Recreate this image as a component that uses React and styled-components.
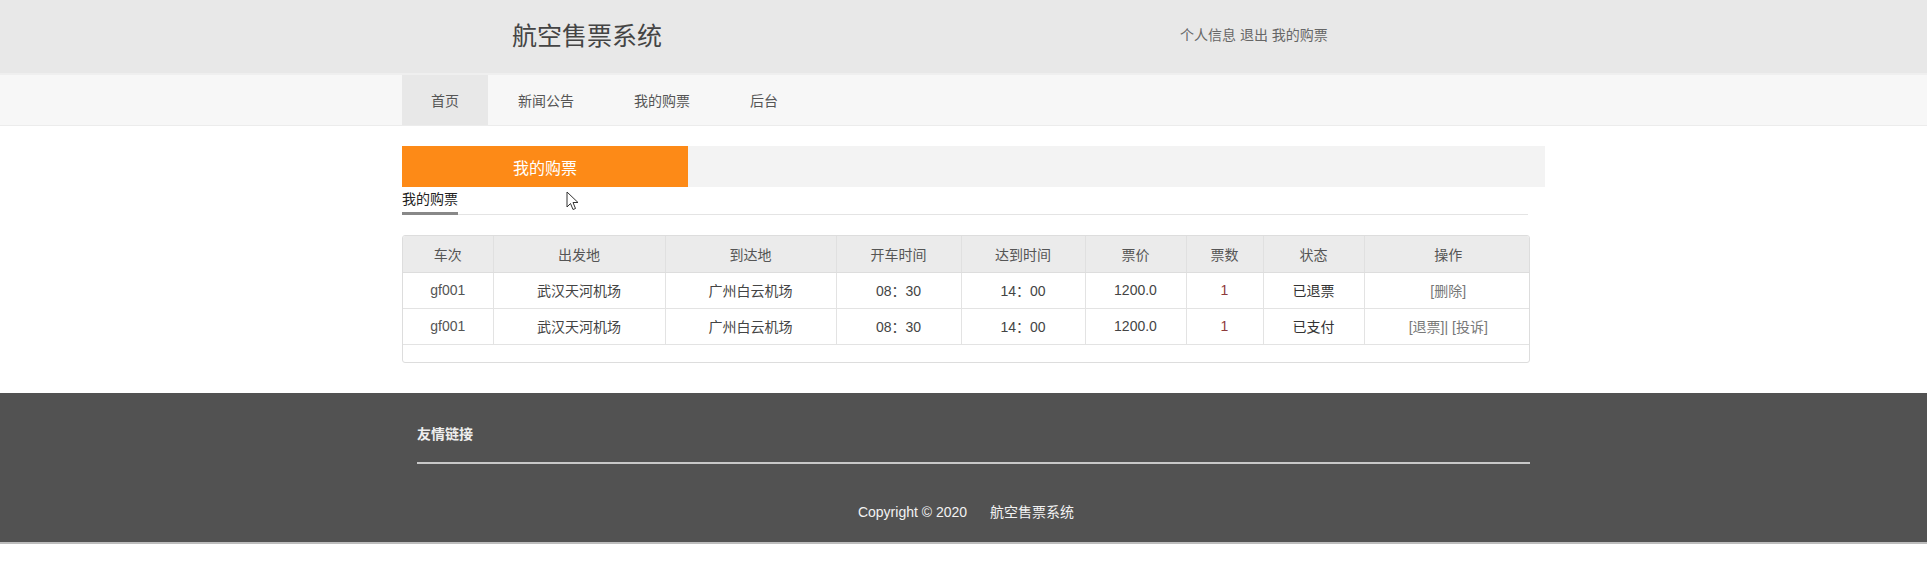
import React from "react";
import styled, { createGlobalStyle } from "styled-components";

const Global = createGlobalStyle`
  html, body { margin: 0; padding: 0; background: #fff; }
  body {
    font-family: "Liberation Sans", "Noto Sans CJK SC", sans-serif;
    font-size: 14px;
    color: #333;
  }
  * { box-sizing: border-box; }
`;

const Container = styled.div`
  width: 1128px;
  margin: 0 auto;
  padding-left: 5px;
  box-sizing: content-box;
`;

const Header = styled.header`
  height: 75px;
  background: #e8e8e8;
  border-bottom: 2px solid #efefef;
`;

const HeaderInner = styled(Container)`
  height: 73px;
  display: flex;
  align-items: center;
`;

const Title = styled.h1`
  margin: 0 0 0 110px;
  font-size: 25px;
  font-weight: normal;
  color: #444;
  line-height: 1;
  width: 668px;
  padding-bottom: 1px;
`;

const TopLinks = styled.div`
  font-size: 14px;
  color: #666;
  padding-bottom: 6px;
  a { color: #666; text-decoration: none; }
`;

const NavBar = styled.nav`
  height: 51px;
  background: #f7f7f7;
  border-bottom: 1px solid #ececec;
`;

const NavInner = styled(Container)`
  display: flex;
  height: 50px;
`;

const NavItem = styled.a`
  display: flex;
  align-items: center;
  padding: 0 ${(p) => (p.$active ? "29px" : "30px")};
  height: 50px;
  font-size: 14px;
  color: #555;
  text-decoration: none;
  background: ${(p) => (p.$active ? "#e8e8e8" : "transparent")};
`;

const Main = styled(Container)`
  padding-top: 20px;
  padding-bottom: 30px;
  position: relative;
`;

const TabBar = styled.div`
  display: flex;
  height: 41px;
  background: #f3f3f3;
  margin-right: -15px;
`;

const OrangeTab = styled.div`
  width: 286px;
  background: #fd8a17;
  color: #fff;
  font-size: 16px;
  display: flex;
  align-items: center;
  justify-content: center;
`;

const SubHead = styled.div`
  border-bottom: 1px solid #e4e4e4;
  margin-right: 2px;
`;

const SubTitle = styled.div`
  display: inline-block;
  font-size: 14px;
  color: #222;
  line-height: 25px;
  border-bottom: 3px solid #888;
  margin-bottom: -1px;
`;

const TableWrap = styled.div`
  margin-top: 20px;
  border: 1px solid #ddd;
  border-radius: 3px;
  overflow: hidden;
`;

const Table = styled.table`
  width: 100%;
  border-collapse: collapse;
  table-layout: fixed;
`;

const Th = styled.th`
  height: 36px;
  background: #ebebeb;
  font-weight: normal;
  font-size: 14px;
  color: #555;
  border-left: 1px solid #e0e0e0;
  border-bottom: 1px solid #ddd;
  &:first-child { border-left: none; }
`;

const Td = styled.td`
  height: ${(p) => (p.$empty ? "18px" : "36px")};
  text-align: center;
  font-size: 14px;
  color: ${(p) => p.$color || "#444"};
  border-left: 1px solid #e3e3e3;
  border-top: 1px solid #e3e3e3;
  &:first-child { border-left: none; }
`;

const OpLink = styled.a`
  color: #777;
  text-decoration: none;
`;

const Cursor = styled.svg`
  position: absolute;
  left: 169px;
  top: 65px;
  width: 13px;
  height: 20px;
`;

const Footer = styled.footer`
  background: #525252;
  border-bottom: 2px solid #bdbdbd;
  height: 151px;
`;

const FooterInner = styled(Container)`
  padding-top: 32px;
`;

const FooterHead = styled.div`
  margin-left: 15px;
  padding-bottom: 19px;
  border-bottom: 2px solid #c8c8c8;
  font-weight: bold;
  font-size: 14px;
  color: #eee;
  line-height: 18px;
`;

const Copyright = styled.div`
  text-align: center;
  color: #f2f2f2;
  font-size: 14px;
  margin-top: 37px;
  span + span { margin-left: 23px; }
`;

const cols = [90, 172, 171, 125, 124, 101, 77, 101, 168];
const heads = ["车次", "出发地", "到达地", "开车时间", "达到时间", "票价", "票数", "状态", "操作"];

const rows = [
  { status: "已退票", ops: ["[删除]"] },
  { status: "已支付", ops: ["[退票]|", "[投诉]"] },
];

export default function App() {
  return (
    <>
      <Global />
      <Header>
        <HeaderInner>
          <Title>航空售票系统</Title>
          <TopLinks>
            <a href="#">个人信息</a> <a href="#">退出</a> <a href="#">我的购票</a>
          </TopLinks>
        </HeaderInner>
      </Header>
      <NavBar>
        <NavInner>
          <NavItem href="#" $active>首页</NavItem>
          <NavItem href="#">新闻公告</NavItem>
          <NavItem href="#">我的购票</NavItem>
          <NavItem href="#">后台</NavItem>
        </NavInner>
      </NavBar>
      <Main>
        <TabBar>
          <OrangeTab>我的购票</OrangeTab>
        </TabBar>
        <SubHead>
          <SubTitle>我的购票</SubTitle>
        </SubHead>
        <Cursor viewBox="0 0 13 20">
          <path d="M1 1 L1 16 L4.5 12.5 L7 18.5 L9.5 17.5 L7 11.5 L12 11.5 Z" fill="#fff" stroke="#333" strokeWidth="1" strokeLinejoin="round" />
        </Cursor>
        <TableWrap>
          <Table>
            <colgroup>
              {cols.map((w, i) => (
                <col key={i} style={{ width: w }} />
              ))}
            </colgroup>
            <thead>
              <tr>
                {heads.map((h) => (
                  <Th key={h}>{h}</Th>
                ))}
              </tr>
            </thead>
            <tbody>
              {rows.map((r, i) => (
                <tr key={i}>
                  <Td $color="#555">gf001</Td>
                  <Td>武汉天河机场</Td>
                  <Td>广州白云机场</Td>
                  <Td>08：30</Td>
                  <Td>14：00</Td>
                  <Td>1200.0</Td>
                  <Td $color="#8e3b3b">1</Td>
                  <Td $color="#333">{r.status}</Td>
                  <Td>
                    {r.ops.map((o, j) => (
                      <React.Fragment key={j}>
                        {j > 0 && " "}
                        <OpLink href="#">{o}</OpLink>
                      </React.Fragment>
                    ))}
                  </Td>
                </tr>
              ))}
              <tr>
                <Td $empty colSpan={9} />
              </tr>
            </tbody>
          </Table>
        </TableWrap>
      </Main>
      <Footer>
        <FooterInner>
          <FooterHead>友情链接</FooterHead>
          <Copyright>
            <span>Copyright © 2020</span>
            <span>航空售票系统</span>
          </Copyright>
        </FooterInner>
      </Footer>
    </>
  );
}
